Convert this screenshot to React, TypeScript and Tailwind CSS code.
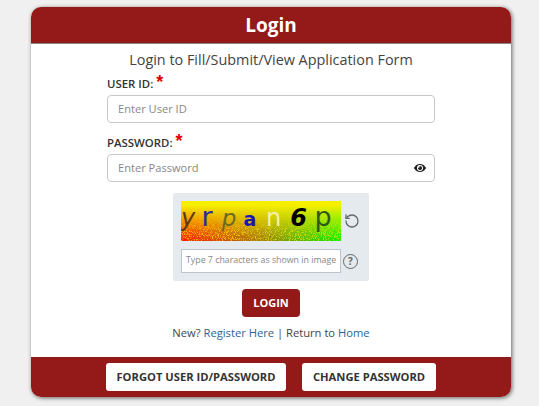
import React from 'react';
import { RotateCcw } from 'lucide-react';
import { FaEye } from 'react-icons/fa';

const captchaChars = [
  { ch: 'y', cls: 'w-[14px] text-[24px] italic text-[#5a3a12]' },
  { ch: 'r', cls: 'w-[24px] text-[27px] text-[#2a2a9a]' },
  { ch: 'p', cls: 'w-[20px] text-[23px] italic text-[#6a6a20]' },
  { ch: 'a', cls: 'w-[22px] text-[19px] font-bold text-[#1616b0]' },
  { ch: 'n', cls: 'w-[25px] text-[24px] text-[#f4f0b0]' },
  { ch: '6', cls: 'w-[25px] text-[24px] font-bold italic text-black' },
  { ch: 'p', cls: 'w-[24px] text-[27px] text-[#2c5c14]' },
];

const App: React.FC = () => {
  return (
    <div className="h-[406px] w-[539px] overflow-hidden bg-[#f0f0f0] pl-[31px] pt-[7px] font-['Open_Sans',sans-serif] text-[#333]">
      <div className="flex h-[390px] w-[480px] flex-col overflow-hidden rounded-[10px] bg-white shadow-[1px_1px_4px_rgba(0,0,0,0.6)]">
        {/* Header */}
        <div className="flex h-[37px] shrink-0 items-center justify-center border-b border-[#888] bg-[#931a18] text-[19px] font-bold text-white">
          Login
        </div>

        <div className="flex flex-1 flex-col items-center pt-[6px]">
          <p className="text-[14.4px] leading-[20px] text-[#444]">Login to Fill/Submit/View Application Form</p>

          <div className="mt-[3px] w-[328px]">
            <label className="flex h-[22px] items-center text-[11.4px] font-semibold text-[#333]">
              USER ID:<span className="ml-[3px] -mt-[4px] font-['Liberation_Sans',sans-serif] text-[18px] leading-none text-[#e00000]">*</span>
            </label>
            <div className="flex h-[28px] items-center rounded-[4px] border border-[#c8c8c8] px-[10px] text-[11.1px] text-[#888]">
              Enter User ID
            </div>

            <label className="mt-[9px] flex h-[22px] items-center text-[11.4px] font-semibold text-[#333]">
              PASSWORD:<span className="ml-[3px] -mt-[4px] font-['Liberation_Sans',sans-serif] text-[18px] leading-none text-[#e00000]">*</span>
            </label>
            <div className="flex h-[28px] items-center justify-between rounded-[4px] border border-[#c8c8c8] pl-[10px] pr-[8px] text-[11.1px] text-[#888]">
              Enter Password
              <FaEye size={12} className="text-[#222]" />
            </div>
          </div>

          {/* Captcha */}
          <div className="mt-[11px] flex h-[88px] w-[196px] flex-col rounded-[2px] bg-[#e4eaee] pl-[8px] pt-[8px]">
            <div className="flex items-center gap-[3px]">
              <div className="relative h-[40px] w-[160px] overflow-hidden">
                <svg className="absolute inset-0 h-full w-full" viewBox="0 0 160 40" preserveAspectRatio="none">
                  <defs>
                    <linearGradient id="side" x1="0" y1="0" x2="1" y2="0">
                      <stop offset="0" stopColor="#ff1000" />
                      <stop offset="0.5" stopColor="#a07a10" />
                      <stop offset="1" stopColor="#00f000" />
                    </linearGradient>
                    <linearGradient id="fade" x1="0" y1="0" x2="0" y2="1">
                      <stop offset="0.1" stopColor="#fff" stopOpacity="0" />
                      <stop offset="1" stopColor="#fff" stopOpacity="1" />
                    </linearGradient>
                    <linearGradient id="fadeLate" x1="0" y1="0" x2="0" y2="1">
                      <stop offset="0.3" stopColor="#000" />
                      <stop offset="0.8" stopColor="#aaa" />
                    </linearGradient>
                    <mask id="fadeMask">
                      <rect width="160" height="40" fill="url(#fade)" />
                    </mask>
                    <mask id="lateMask">
                      <rect width="160" height="40" fill="url(#fadeLate)" />
                    </mask>
                    <filter id="speck" x="0" y="0" width="100%" height="100%">
                      <feTurbulence type="fractalNoise" baseFrequency="1.3" numOctaves="2" seed="9" />
                      <feColorMatrix values="0 0 0 0 1  0 0 0 0 0.85  0 0 0 0 0  0 0 0 5 -2.4" />
                    </filter>
                  </defs>
                  <rect width="160" height="40" fill="#f6f000" />
                  <rect width="160" height="40" fill="url(#side)" mask="url(#fadeMask)" />
                  <rect width="160" height="40" filter="url(#speck)" mask="url(#lateMask)" />
                </svg>
                <div className="relative flex h-full items-baseline pt-[2px] font-['DejaVu_Sans',sans-serif] leading-none">
                  {captchaChars.map((c, i) => (
                    <span key={i} className={`text-center ${c.cls}`}>
                      {c.ch}
                    </span>
                  ))}
                </div>
              </div>
              <RotateCcw size={16} strokeWidth={1.9} className="text-[#666]" />
            </div>
            <div className="mt-[8px] flex items-center gap-[2px]">
              <div className="flex h-[24px] w-[160px] shrink-0 items-center whitespace-nowrap border border-[#bcc4cc] bg-white pl-[4px] text-[8.8px] text-[#888]">
                Type 7 characters as shown in image
              </div>
              <div className="ml-[0px] flex h-[15px] w-[15px] items-center justify-center rounded-full border-[1.5px] border-[#666] text-[10px] font-bold text-[#666]">
                ?
              </div>
            </div>
          </div>

          <button className="mt-[8px] flex h-[28px] w-[58px] items-center justify-center rounded-[4px] bg-[#931a18] text-[11px] font-bold text-white">
            LOGIN
          </button>

          <p className="mt-[8px] text-[11.2px] leading-[16px] text-[#444]">
            New? <a className="text-[#2a6496]">Register Here</a> | Return to <a className="text-[#2a6496]">Home</a>
          </p>
        </div>

        {/* Footer */}
        <div className="flex h-[40px] shrink-0 items-center justify-center gap-[16px] bg-[#931a18]">
          <button className="flex h-[28px] w-[180px] items-center justify-center rounded-[3px] bg-white text-[11.2px] font-bold text-[#333]">
            FORGOT USER ID/PASSWORD
          </button>
          <button className="flex h-[28px] w-[134px] items-center justify-center rounded-[3px] bg-white text-[11.2px] font-bold text-[#333]">
            CHANGE PASSWORD
          </button>
        </div>
      </div>
    </div>
  );
};

export default App;
